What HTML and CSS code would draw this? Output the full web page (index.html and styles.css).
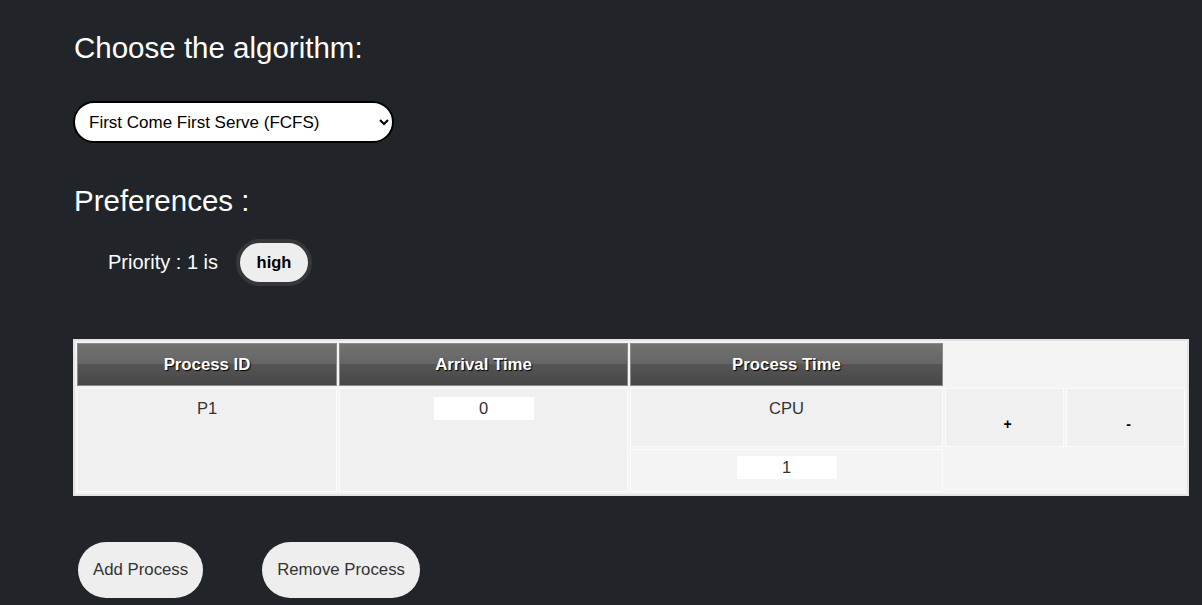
FILE: index.html
```html
<!DOCTYPE html>
<html>
<head>
<meta charset="utf-8">
<link rel="stylesheet" href="styles.css">
</head>
<body>
<main class="page">
  <h2 class="title">Choose the algorithm:</h2>
  <select class="algo">
    <option>First Come First Serve (FCFS)</option>
  </select>
  <h2 class="title pref">Preferences :</h2>
  <div class="priority">
    <span class="priority-label">Priority : 1 is</span>
    <button class="toggle">high</button>
  </div>
  <table class="procs">
    <colgroup>
      <col class="c1"><col class="c2"><col class="c3"><col class="c4"><col class="c5">
    </colgroup>
    <tr class="head">
      <th>Process ID</th>
      <th>Arrival Time</th>
      <th>Process Time</th>
    </tr>
    <tr class="row1">
      <td rowspan="2" class="cell">P1</td>
      <td rowspan="2" class="cell"><input class="num" value="0"></td>
      <td class="cell cpu">CPU</td>
      <td class="cell op">+</td>
      <td class="cell op">-</td>
    </tr>
    <tr class="row2">
      <td class="cell light"><input class="num" value="1"></td>
    </tr>
  </table>
  <div class="actions">
    <button class="pill">Add Process</button>
    <button class="pill">Remove Process</button>
  </div>
</main>
</body>
</html>
```

FILE: styles.css
```css
html, body {
  margin: 0;
  background: #212529;
  font-family: "Liberation Sans", Arial, sans-serif;
}
.page {
  padding: 0 0 0 73px;
  display: flex;
  flex-direction: column;
  align-items: flex-start;
}
.title {
  color: #fff;
  font-weight: 400;
  font-size: 29.5px;
  line-height: 34px;
  margin: 31px 0 0 1px;
}
.algo {
  margin-top: 36px;
  width: 321px;
  height: 42px;
  border: 2px solid #000;
  border-radius: 21px;
  background: #fff;
  font-family: "Liberation Sans", Arial, sans-serif;
  font-size: 17px;
  color: #000;
  padding: 0 8px 0 10px;
}
.pref {
  margin-top: 41px;
}
.priority {
  display: flex;
  align-items: center;
  margin: 21px 0 0 35px;
  gap: 18px;
}
.priority-label {
  color: #fff;
  font-size: 20px;
}
.toggle {
  width: 76px;
  height: 47px;
  border-radius: 24px;
  border: 4px solid #36373a;
  background: #eee;
  font-family: "Liberation Sans", Arial, sans-serif;
  font-weight: 700;
  font-size: 16.5px;
  color: #000;
  padding: 0;
}
.procs {
  margin-top: 53px;
  width: 1116px;
  table-layout: fixed;
  border-collapse: separate;
  border-spacing: 2px;
  border: 2px solid #e3e3e3;
  background: #f4f4f4;
}
.c1 { width: 260px; }
.c2 { width: 289px; }
.c3 { width: 313px; }
.c4 { width: 119px; }
.c5 { width: 119px; }
.head th {
  height: 43px;
  box-sizing: border-box;
  padding: 0;
  border: 1px solid #8a8a8a;
  background: linear-gradient(#727272 0%, #656565 48%, #555 50%, #474747 100%);
  color: #fff;
  font-size: 16.8px;
  font-weight: 700;
  text-shadow: 1px 1px 1px #000;
}
.cell {
  background: #f0f0f0;
  border: 1px solid #fbfbfb;
  color: #333;
  font-size: 16.5px;
  text-align: center;
  vertical-align: top;
  padding: 10px 0 0;
}
.row1 .cell { height: 59px; box-sizing: border-box; }
.row2 .cell { height: 43px; box-sizing: border-box; padding-top: 8px; }
.cell.light { background: #f4f4f4; }
.op {
  font-weight: 700;
  font-size: 14px;
  color: #000;
  padding-top: 27px;
  padding-left: 6px;
}
.num {
  width: 100px;
  height: 23px;
  box-sizing: border-box;
  border: none;
  background: #fff;
  text-align: center;
  font-family: "Liberation Sans", Arial, sans-serif;
  font-size: 16.5px;
  color: #333;
  padding: 0;
  margin-top: -2px;
}
.actions {
  display: flex;
  gap: 59px;
  margin: 46px 0 0 5px;
}
.pill {
  height: 56px;
  padding: 0 15px;
  border: none;
  border-radius: 28px;
  background: #eee;
  color: #333;
  font-family: "Liberation Sans", Arial, sans-serif;
  font-size: 16.8px;
}
```
